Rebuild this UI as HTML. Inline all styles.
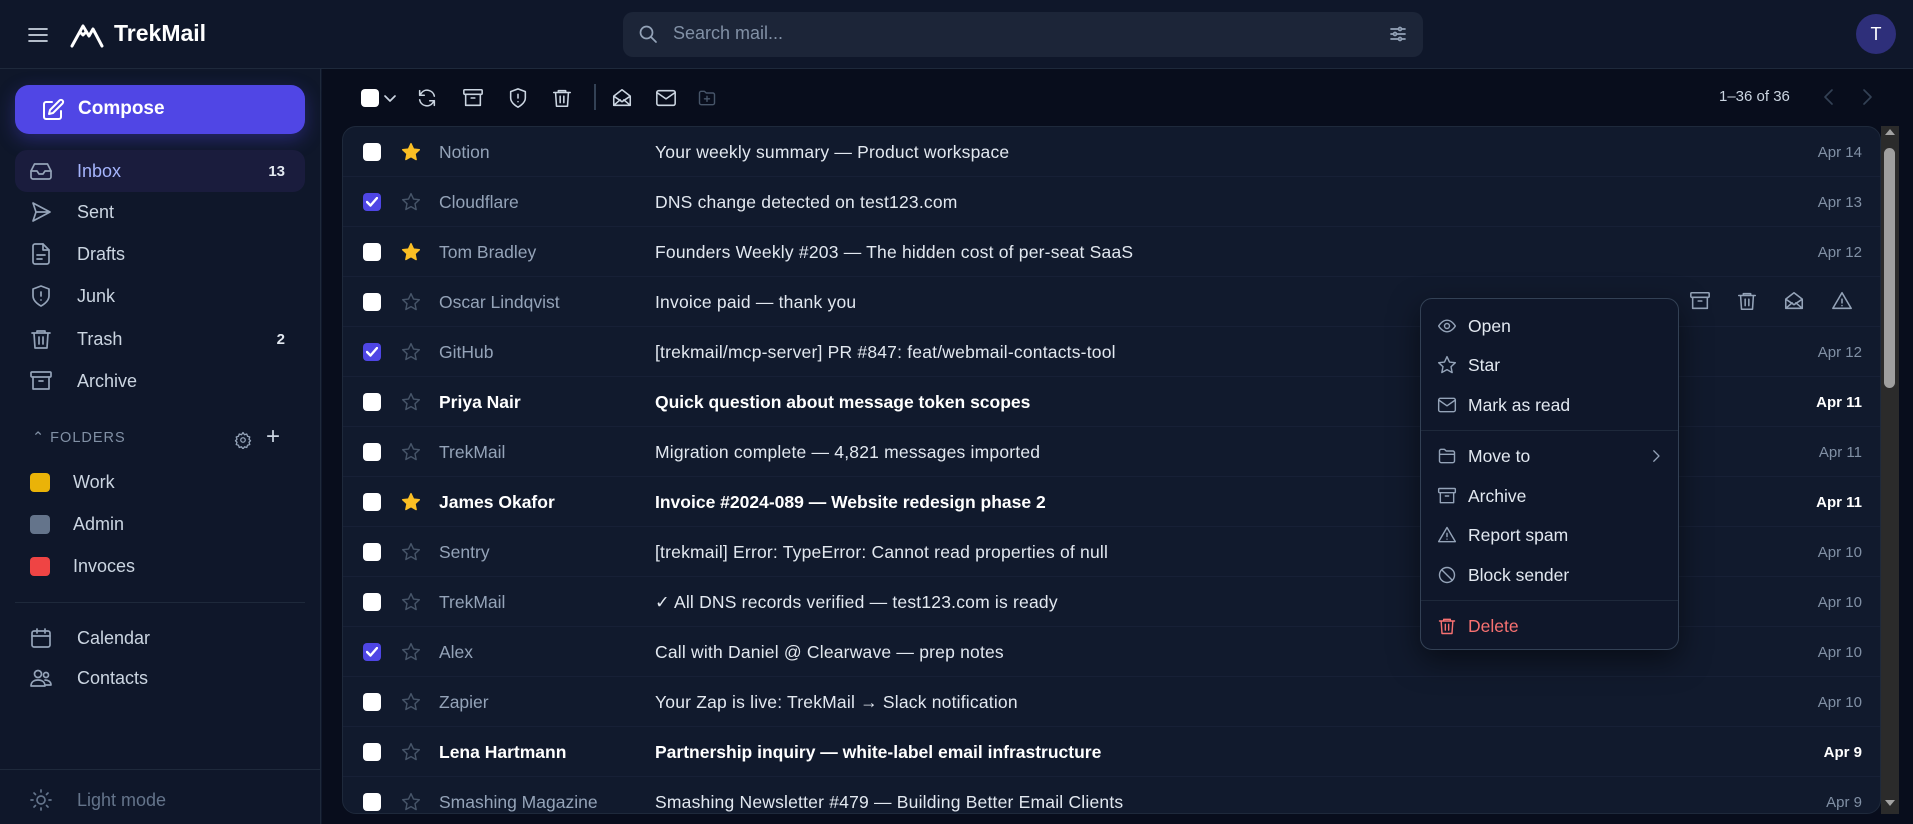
<!DOCTYPE html>
<html><head><meta charset="utf-8"><style>
*{box-sizing:border-box;margin:0;padding:0}
body{width:1913px;height:824px;overflow:hidden;background:#0f172a;font-family:"Liberation Sans",sans-serif;color:#cbd5e1;position:relative}
.a{position:absolute}
svg{fill:none;stroke:currentColor;stroke-width:1.7;stroke-linecap:round;stroke-linejoin:round}
.hdr{left:0;top:0;width:1913px;height:69px;border-bottom:1px solid #1e293b;background:#0f172a}
.side{left:0;top:69px;width:321px;height:755px;border-right:1px solid #1e293b;background:#0f172a}
.nav{left:15px;width:290px;height:42px;display:flex;align-items:center;font-size:18px;color:#cbd5e1}
.nav svg{position:absolute;left:14px;width:24px;height:24px;color:#94a3b8}
.nav span{position:absolute;left:62px}
.nav b{position:absolute;right:20px;font-size:15px;color:#e2e8f0}
.main{left:322px;top:69px;width:1591px;height:755px;background:#080d1c}
.tb svg{width:22px;height:22px;color:#cbd5e1}
.panel{left:342px;top:126px;width:1539px;height:688px;border:1px solid #1e293b;border-radius:14px;background:#111a2d;overflow:hidden}
.row{position:absolute;left:0;width:1539px;height:50px;border-bottom:1px solid #172036;font-size:17.5px}
.cb{position:absolute;left:20px;top:16px;width:18px;height:18px;border-radius:4px;background:#fff}
.cb.on{background:#4f46e5}
.st{position:absolute;left:58px;top:15px;width:20px;height:20px}
.sn{position:absolute;left:96px;top:15px;color:#94a3b8}
.sj{position:absolute;left:312px;top:15px;color:#e2e8f0;letter-spacing:.2px}
.dt{position:absolute;right:20px;top:17px;font-size:15px;color:#8190a5}
.row.b .sn,.row.b .sj{color:#fff;font-weight:bold;letter-spacing:0}
.row.b .dt{color:#fff;font-weight:bold}
.menu{left:1420px;top:298px;width:259px;height:352px;background:#0f172a;border:1px solid #334155;border-radius:12px;box-shadow:0 10px 30px rgba(0,0,0,.5)}
.mi{position:absolute;left:0;width:257px;height:36px;font-size:17.5px;color:#e2e8f0}
.mi svg{position:absolute;left:16px;top:8px;width:20px;height:20px;color:#94a3b8}
.mi span{position:absolute;left:47px;top:8px}
.sep{position:absolute;left:0;width:257px;height:1px;background:#1e293b}
</style></head><body>
<div class="a hdr">
 <svg class="a" style="left:26px;top:24px;width:24px;height:22px;color:#cbd5e1" viewBox="0 0 24 22"><path d="M3 5h18M3 11h18M3 17h18"/></svg>
 <svg class="a" style="left:70px;top:20px;width:34px;height:28px;color:#fff;stroke-width:3" viewBox="0 0 34 28"><path d="M2 26L13 6l6 10 4-7 9 17"/><path d="M10 12l3 3 3-3"/></svg>
 <div class="a" style="left:114px;top:20px;font-size:23px;font-weight:bold;color:#fff">TrekMail</div>
 <div class="a" style="left:623px;top:12px;width:800px;height:45px;background:#1c2538;border-radius:10px"></div>
 <svg class="a" style="left:638px;top:24px;width:20px;height:20px;color:#94a3b8" viewBox="0 0 20 20"><circle cx="8.5" cy="8.5" r="6"/><path d="M13 13l5 5"/></svg>
 <div class="a" style="left:673px;top:23px;font-size:18px;color:#8190a5">Search mail...</div>
 <svg class="a" style="left:1389px;top:25px;width:18px;height:18px;color:#94a3b8" viewBox="0 0 18 18"><path d="M2 4h14M2 9h14M2 14h14"/><circle cx="11" cy="4" r="1.5" fill="#1c2538"/><circle cx="6" cy="9" r="1.5" fill="#1c2538"/><circle cx="11" cy="14" r="1.5" fill="#1c2538"/></svg>
 <div class="a" style="left:1856px;top:14px;width:40px;height:40px;border-radius:50%;background:#2e2f7a;color:#fff;font-size:18px;text-align:center;line-height:40px">T</div>
</div>
<div class="a side">
 <div class="a" style="left:15px;top:16px;width:290px;height:49px;border-radius:14px;background:#5046e5;box-shadow:0 6px 18px rgba(80,70,229,.35)">
  <svg class="a" style="left:26px;top:13px;width:24px;height:24px;color:#fff;stroke-width:2" viewBox="0 0 24 24"><path d="M11 4H5a2 2 0 0 0-2 2v13a2 2 0 0 0 2 2h13a2 2 0 0 0 2-2v-6"/><path d="M18.5 2.5a2.1 2.1 0 0 1 3 3L12 15l-4 1 1-4z"/></svg>
  <div class="a" style="left:63px;top:13px;font-size:19px;font-weight:bold;color:#fff">Compose</div>
 </div>
 <div class="a nav" style="top:81px;background:#1a1c3d;border-radius:12px"><svg viewBox="0 0 24 24"><path d="M22 12h-6l-2 3h-4l-2-3H2"/><path d="M5.5 5h13l3.5 7v6a2 2 0 0 1-2 2H4a2 2 0 0 1-2-2v-6z"/></svg><span style="color:#a5b4fc">Inbox</span><b>13</b></div>
 <div class="a nav" style="top:122px"><svg viewBox="0 0 24 24"><path d="M4 3l17 9-17 9 3-9z M7 12h14"/></svg><span>Sent</span></div>
 <div class="a nav" style="top:164px"><svg viewBox="0 0 24 24"><path d="M14 2H6a2 2 0 0 0-2 2v16a2 2 0 0 0 2 2h12a2 2 0 0 0 2-2V8z"/><path d="M14 2v6h6M8 13h8M8 17h5"/></svg><span>Drafts</span></div>
 <div class="a nav" style="top:206px"><svg viewBox="0 0 24 24"><path d="M12 22s8-4 8-10V5l-8-3-8 3v7c0 6 8 10 8 10zM12 8v4M12 16h0"/></svg><span>Junk</span></div>
 <div class="a nav" style="top:249px"><svg viewBox="0 0 24 24"><path d="M3 6h18M8 6V4h8v2M5 6l1 15h12l1-15M10 10v7M14 10v7"/></svg><span>Trash</span><b>2</b></div>
 <div class="a nav" style="top:291px"><svg viewBox="0 0 24 24"><rect x="2" y="3" width="20" height="5" rx="1"/><path d="M4 8v12h16V8M10 12h4"/></svg><span>Archive</span></div>
 <div class="a" style="left:32px;top:361px;font-size:14.5px;letter-spacing:1px;color:#8190a5">⌃ FOLDERS</div>
 <svg class="a" style="left:234px;top:362px;width:18px;height:18px;color:#94a3b8" viewBox="0 0 24 24"><circle cx="12" cy="12" r="3"/><path d="M12 2l2 3 3-1 1 3 3 1-1 3 2 2-2 2 1 3-3 1-1 3-3-1-2 3-2-3-3 1-1-3-3-1 1-3-2-2 2-2-1-3 3-1 1-3 3 1z"/></svg>
 <div class="a" style="left:266px;top:354px;font-size:24px;color:#cbd5e1">+</div>
 <div class="a" style="left:30px;top:404px;width:20px;height:19px;border-radius:4px;background:#eab308"></div><div class="a" style="left:73px;top:403px;font-size:18px">Work</div>
 <div class="a" style="left:30px;top:446px;width:20px;height:19px;border-radius:4px;background:#64748b"></div><div class="a" style="left:73px;top:445px;font-size:18px">Admin</div>
 <div class="a" style="left:30px;top:488px;width:20px;height:19px;border-radius:4px;background:#ef4444"></div><div class="a" style="left:73px;top:487px;font-size:18px">Invoces</div>
 <div class="a" style="left:15px;top:533px;width:290px;height:1px;background:#1e293b"></div>
 <div class="a nav" style="top:548px"><svg viewBox="0 0 24 24"><rect x="3" y="5" width="18" height="16" rx="2"/><path d="M3 10h18M8 3v4M16 3v4"/></svg><span>Calendar</span></div>
 <div class="a nav" style="top:588px"><svg viewBox="0 0 24 24"><circle cx="9" cy="8" r="3.5"/><circle cx="17" cy="9" r="2.5"/><path d="M2 20c0-4 3-6 7-6s7 2 7 6zM16 14c3 0 6 1.5 6 5h-5"/></svg><span>Contacts</span></div>
 <div class="a" style="left:0;top:700px;width:321px;height:1px;background:#1e293b"></div>
 <div class="a nav" style="top:710px"><svg viewBox="0 0 24 24" style="color:#64748b"><circle cx="12" cy="12" r="4"/><path d="M12 2v2M12 20v2M2 12h2M20 12h2M5 5l1.5 1.5M17.5 17.5L19 19M5 19l1.5-1.5M17.5 6.5L19 5"/></svg><span style="color:#64748b">Light mode</span></div>
</div>
<div class="a main">
 <div class="tb">
  <div class="a" style="left:39px;top:20px;width:18px;height:18px;border-radius:4px;background:#fff"></div>
  <svg class="a" style="left:61px;top:22px;width:14px;height:14px" viewBox="0 0 14 14"><path d="M2 5l5 5 5-5"/></svg>
  <svg class="a" style="left:94px;top:18px" viewBox="0 0 24 24"><path d="M20 10a8 8 0 0 0-14.5-3L4 9M4 14a8 8 0 0 0 14.5 3L20 15M4 4v5h5M20 20v-5h-5"/></svg>
  <svg class="a" style="left:140px;top:18px" viewBox="0 0 24 24"><rect x="2" y="3" width="20" height="5" rx="1"/><path d="M4 8v12h16V8M10 12h4"/></svg>
  <svg class="a" style="left:185px;top:18px" viewBox="0 0 24 24"><path d="M12 22s8-4 8-10V5l-8-3-8 3v7c0 6 8 10 8 10zM12 8v4M12 16h0"/></svg>
  <svg class="a" style="left:229px;top:18px" viewBox="0 0 24 24"><path d="M3 6h18M8 6V4h8v2M5 6l1 15h12l1-15M10 10v7M14 10v7"/></svg>
  <div class="a" style="left:272px;top:15px;width:2px;height:26px;background:#334155"></div>
  <svg class="a" style="left:289px;top:18px" viewBox="0 0 24 24"><path d="M3 10l9-7 9 7v10H3zM3 10l9 6 9-6M3 20l7-6M21 20l-7-6"/></svg>
  <svg class="a" style="left:333px;top:18px" viewBox="0 0 24 24"><rect x="2" y="4" width="20" height="16" rx="2"/><path d="M2 6l10 7 10-7"/></svg>
  <svg class="a" style="left:375px;top:19px;width:20px;height:20px;color:#475569" viewBox="0 0 24 24"><path d="M3 6a2 2 0 0 1 2-2h4l2 2h8a2 2 0 0 1 2 2v10a2 2 0 0 1-2 2H5a2 2 0 0 1-2-2zM12 10v6M9 13h6"/></svg>
  <div class="a" style="left:1397px;top:19px;font-size:15px;color:#cbd5e1">1–36 of 36</div>
  <svg class="a" style="left:1497px;top:18px;width:20px;height:20px;color:#334155" viewBox="0 0 20 20"><path d="M13 3l-7 7 7 7"/></svg>
  <svg class="a" style="left:1535px;top:18px;width:20px;height:20px;color:#334155" viewBox="0 0 20 20"><path d="M7 3l7 7-7 7"/></svg>
 </div>
</div>
<div class="a panel">
<div class="row" style="top:0"><div class="cb"></div><svg class="st" viewBox="0 0 24 24" style="color:#fbbf24;fill:#fbbf24"><path d="M12 2l3 6.5 7 .8-5.2 4.8 1.4 7L12 17.6 5.8 21l1.4-7L2 9.3l7-.8z"/></svg><span class="sn">Notion</span><span class="sj">Your weekly summary — Product workspace</span><span class="dt">Apr 14</span></div>
<div class="row" style="top:50px"><div class="cb on"></div><svg class="a" style="left:23px;top:20px;width:12px;height:10px;color:#fff;stroke-width:2.4" viewBox="0 0 12 10"><path d="M1 5l3.5 3.5L11 1"/></svg><svg class="st" viewBox="0 0 24 24" style="color:#475569"><path d="M12 2l3 6.5 7 .8-5.2 4.8 1.4 7L12 17.6 5.8 21l1.4-7L2 9.3l7-.8z"/></svg><span class="sn">Cloudflare</span><span class="sj">DNS change detected on test123.com</span><span class="dt">Apr 13</span></div>
<div class="row" style="top:100px"><div class="cb"></div><svg class="st" viewBox="0 0 24 24" style="color:#fbbf24;fill:#fbbf24"><path d="M12 2l3 6.5 7 .8-5.2 4.8 1.4 7L12 17.6 5.8 21l1.4-7L2 9.3l7-.8z"/></svg><span class="sn">Tom Bradley</span><span class="sj">Founders Weekly #203 — The hidden cost of per-seat SaaS</span><span class="dt">Apr 12</span></div>
<div class="row" style="top:150px"><div class="cb"></div><svg class="st" viewBox="0 0 24 24" style="color:#475569"><path d="M12 2l3 6.5 7 .8-5.2 4.8 1.4 7L12 17.6 5.8 21l1.4-7L2 9.3l7-.8z"/></svg><span class="sn">Oscar Lindqvist</span><span class="sj">Invoice paid — thank you</span>
 <svg class="a" style="left:1346px;top:13px;width:22px;height:22px;color:#94a3b8" viewBox="0 0 24 24"><rect x="2" y="3" width="20" height="5" rx="1"/><path d="M4 8v12h16V8M10 12h4"/></svg>
 <svg class="a" style="left:1393px;top:13px;width:22px;height:22px;color:#94a3b8" viewBox="0 0 24 24"><path d="M3 6h18M8 6V4h8v2M5 6l1 15h12l1-15M10 10v7M14 10v7"/></svg>
 <svg class="a" style="left:1440px;top:13px;width:22px;height:22px;color:#94a3b8" viewBox="0 0 24 24"><path d="M3 10l9-7 9 7v10H3zM3 10l9 6 9-6M3 20l7-6M21 20l-7-6"/></svg>
 <svg class="a" style="left:1488px;top:13px;width:22px;height:22px;color:#94a3b8" viewBox="0 0 24 24"><path d="M12 3L2 20h20zM12 10v4M12 17h0"/></svg>
</div>
<div class="row" style="top:200px"><div class="cb on"></div><svg class="a" style="left:23px;top:20px;width:12px;height:10px;color:#fff;stroke-width:2.4" viewBox="0 0 12 10"><path d="M1 5l3.5 3.5L11 1"/></svg><svg class="st" viewBox="0 0 24 24" style="color:#475569"><path d="M12 2l3 6.5 7 .8-5.2 4.8 1.4 7L12 17.6 5.8 21l1.4-7L2 9.3l7-.8z"/></svg><span class="sn">GitHub</span><span class="sj">[trekmail/mcp-server] PR #847: feat/webmail-contacts-tool</span><span class="dt">Apr 12</span></div>
<div class="row b" style="top:250px"><div class="cb"></div><svg class="st" viewBox="0 0 24 24" style="color:#475569"><path d="M12 2l3 6.5 7 .8-5.2 4.8 1.4 7L12 17.6 5.8 21l1.4-7L2 9.3l7-.8z"/></svg><span class="sn">Priya Nair</span><span class="sj">Quick question about message token scopes</span><span class="dt">Apr 11</span></div>
<div class="row" style="top:300px"><div class="cb"></div><svg class="st" viewBox="0 0 24 24" style="color:#475569"><path d="M12 2l3 6.5 7 .8-5.2 4.8 1.4 7L12 17.6 5.8 21l1.4-7L2 9.3l7-.8z"/></svg><span class="sn">TrekMail</span><span class="sj">Migration complete — 4,821 messages imported</span><span class="dt">Apr 11</span></div>
<div class="row b" style="top:350px"><div class="cb"></div><svg class="st" viewBox="0 0 24 24" style="color:#fbbf24;fill:#fbbf24"><path d="M12 2l3 6.5 7 .8-5.2 4.8 1.4 7L12 17.6 5.8 21l1.4-7L2 9.3l7-.8z"/></svg><span class="sn">James Okafor</span><span class="sj">Invoice #2024-089 — Website redesign phase 2</span><span class="dt">Apr 11</span></div>
<div class="row" style="top:400px"><div class="cb"></div><svg class="st" viewBox="0 0 24 24" style="color:#475569"><path d="M12 2l3 6.5 7 .8-5.2 4.8 1.4 7L12 17.6 5.8 21l1.4-7L2 9.3l7-.8z"/></svg><span class="sn">Sentry</span><span class="sj">[trekmail] Error: TypeError: Cannot read properties of null</span><span class="dt">Apr 10</span></div>
<div class="row" style="top:450px"><div class="cb"></div><svg class="st" viewBox="0 0 24 24" style="color:#475569"><path d="M12 2l3 6.5 7 .8-5.2 4.8 1.4 7L12 17.6 5.8 21l1.4-7L2 9.3l7-.8z"/></svg><span class="sn">TrekMail</span><span class="sj">✓ All DNS records verified — test123.com is ready</span><span class="dt">Apr 10</span></div>
<div class="row" style="top:500px"><div class="cb on"></div><svg class="a" style="left:23px;top:20px;width:12px;height:10px;color:#fff;stroke-width:2.4" viewBox="0 0 12 10"><path d="M1 5l3.5 3.5L11 1"/></svg><svg class="st" viewBox="0 0 24 24" style="color:#475569"><path d="M12 2l3 6.5 7 .8-5.2 4.8 1.4 7L12 17.6 5.8 21l1.4-7L2 9.3l7-.8z"/></svg><span class="sn">Alex</span><span class="sj">Call with Daniel @ Clearwave — prep notes</span><span class="dt">Apr 10</span></div>
<div class="row" style="top:550px"><div class="cb"></div><svg class="st" viewBox="0 0 24 24" style="color:#475569"><path d="M12 2l3 6.5 7 .8-5.2 4.8 1.4 7L12 17.6 5.8 21l1.4-7L2 9.3l7-.8z"/></svg><span class="sn">Zapier</span><span class="sj">Your Zap is live: TrekMail → Slack notification</span><span class="dt">Apr 10</span></div>
<div class="row b" style="top:600px"><div class="cb"></div><svg class="st" viewBox="0 0 24 24" style="color:#475569"><path d="M12 2l3 6.5 7 .8-5.2 4.8 1.4 7L12 17.6 5.8 21l1.4-7L2 9.3l7-.8z"/></svg><span class="sn">Lena Hartmann</span><span class="sj">Partnership inquiry — white-label email infrastructure</span><span class="dt">Apr 9</span></div>
<div class="row" style="top:650px"><div class="cb"></div><svg class="st" viewBox="0 0 24 24" style="color:#475569"><path d="M12 2l3 6.5 7 .8-5.2 4.8 1.4 7L12 17.6 5.8 21l1.4-7L2 9.3l7-.8z"/></svg><span class="sn">Smashing Magazine</span><span class="sj">Smashing Newsletter #479 — Building Better Email Clients</span><span class="dt">Apr 9</span></div>
</div>
<div class="a" style="left:1881px;top:126px;width:18px;height:688px;background:#2b2b2b"></div>
<div class="a" style="left:1884px;top:148px;width:11px;height:240px;border-radius:6px;background:#9f9f9f"></div>
<div class="a" style="left:1885px;top:129px;width:0;height:0;border-left:5px solid transparent;border-right:5px solid transparent;border-bottom:6px solid #a3a3a3"></div>
<div class="a" style="left:1885px;top:800px;width:0;height:0;border-left:5px solid transparent;border-right:5px solid transparent;border-top:6px solid #a3a3a3"></div>
<div class="a menu">
 <div class="mi" style="top:9px"><svg viewBox="0 0 24 24"><path d="M2 12s4-7 10-7 10 7 10 7-4 7-10 7S2 12 2 12z"/><circle cx="12" cy="12" r="3"/></svg><span>Open</span></div>
 <div class="mi" style="top:48px"><svg viewBox="0 0 24 24"><path d="M12 2l3 6.5 7 .8-5.2 4.8 1.4 7L12 17.6 5.8 21l1.4-7L2 9.3l7-.8z"/></svg><span>Star</span></div>
 <div class="mi" style="top:88px"><svg viewBox="0 0 24 24"><rect x="2" y="4" width="20" height="16" rx="2"/><path d="M2 6l10 7 10-7"/></svg><span>Mark as read</span></div>
 <div class="sep" style="top:131px"></div>
 <div class="mi" style="top:139px"><svg viewBox="0 0 24 24"><path d="M3 6a2 2 0 0 1 2-2h4l2 2h8a2 2 0 0 1 2 2v10a2 2 0 0 1-2 2H5a2 2 0 0 1-2-2zM3 10h18"/></svg><span>Move to</span><svg viewBox="0 0 24 24" style="left:226px;width:18px"><path d="M9 5l7 7-7 7"/></svg></div>
 <div class="mi" style="top:179px"><svg viewBox="0 0 24 24"><rect x="2" y="3" width="20" height="5" rx="1"/><path d="M4 8v12h16V8M10 12h4"/></svg><span>Archive</span></div>
 <div class="mi" style="top:218px"><svg viewBox="0 0 24 24"><path d="M12 3L2 20h20zM12 10v4M12 17h0"/></svg><span>Report spam</span></div>
 <div class="mi" style="top:258px"><svg viewBox="0 0 24 24"><circle cx="12" cy="12" r="9"/><path d="M5.5 5.5l13 13"/></svg><span>Block sender</span></div>
 <div class="sep" style="top:301px"></div>
 <div class="mi" style="top:309px;color:#f87171"><svg viewBox="0 0 24 24" style="color:#f87171"><path d="M3 6h18M8 6V4h8v2M5 6l1 15h12l1-15M10 10v7M14 10v7"/></svg><span>Delete</span></div>
</div>
</body></html>
